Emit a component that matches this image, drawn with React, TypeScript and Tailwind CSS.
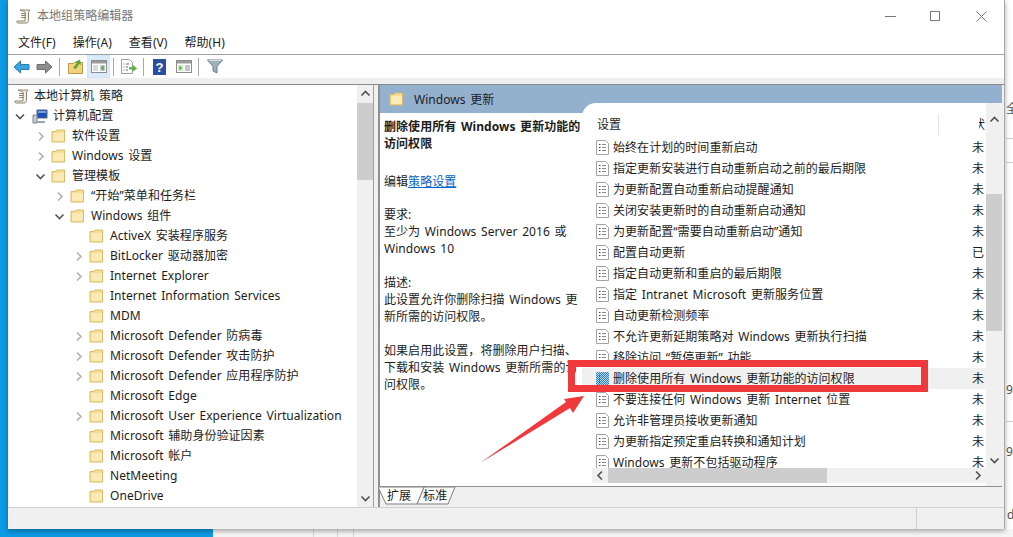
import { ReactNode } from "react";

type TreeRow = {
  label: string;
  depth: 1 | 2 | 3;
  chevron?: "right" | "down";
};

const TREE_ROWS: TreeRow[] = [
  { label: "软件设置", depth: 1, chevron: "right" },
  { label: "Windows 设置", depth: 1, chevron: "right" },
  { label: "管理模板", depth: 1, chevron: "down" },
  { label: "“开始”菜单和任务栏", depth: 2, chevron: "right" },
  { label: "Windows 组件", depth: 2, chevron: "down" },
  { label: "ActiveX 安装程序服务", depth: 3 },
  { label: "BitLocker 驱动器加密", depth: 3, chevron: "right" },
  { label: "Internet Explorer", depth: 3, chevron: "right" },
  { label: "Internet Information Services", depth: 3 },
  { label: "MDM", depth: 3 },
  { label: "Microsoft Defender 防病毒", depth: 3, chevron: "right" },
  { label: "Microsoft Defender 攻击防护", depth: 3, chevron: "right" },
  { label: "Microsoft Defender 应用程序防护", depth: 3, chevron: "right" },
  { label: "Microsoft Edge", depth: 3 },
  { label: "Microsoft User Experience Virtualization", depth: 3, chevron: "right" },
  { label: "Microsoft 辅助身份验证因素", depth: 3 },
  { label: "Microsoft 帐户", depth: 3 },
  { label: "NetMeeting", depth: 3 },
  { label: "OneDrive", depth: 3 },
];

const DEPTH_PADDING = { 1: "pl-[25px]", 2: "pl-[44px]", 3: "pl-[63px]" };

const SETTINGS = [
  { label: "始终在计划的时间重新启动", state: "未" },
  { label: "指定更新安装进行自动重新启动之前的最后期限", state: "未" },
  { label: "为更新配置自动重新启动提醒通知", state: "未" },
  { label: "关闭安装更新时的自动重新启动通知", state: "未" },
  { label: "为更新配置“需要自动重新启动”通知", state: "未" },
  { label: "配置自动更新", state: "已" },
  { label: "指定自动更新和重启的最后期限", state: "未" },
  { label: "指定 Intranet Microsoft 更新服务位置", state: "未" },
  { label: "自动更新检测频率", state: "未" },
  { label: "不允许更新延期策略对 Windows 更新执行扫描", state: "未" },
  { label: "移除访问 “暂停更新” 功能", state: "未" },
  { label: "删除使用所有 Windows 更新功能的访问权限", state: "未", selected: true },
  { label: "不要连接任何 Windows 更新 Internet 位置", state: "未" },
  { label: "允许非管理员接收更新通知", state: "未" },
  { label: "为更新指定预定重启转换和通知计划", state: "未" },
  { label: "Windows 更新不包括驱动程序", state: "未" },
];

function Folder() {
  return (
    <svg width="15" height="14" viewBox="0 0 15 14" className="shrink-0">
      <path d="M1 2.5h4l1-1.5h7.5v12H1z" fill="#f6dd90" stroke="#d9bb6a" strokeWidth="1" />
      <path d="M2 4h11v8H2z" fill="#fbeab5" />
    </svg>
  );
}

function PolicyIcon({ selected }: { selected?: boolean }) {
  if (selected) {
    return (
      <svg width="13" height="14" viewBox="0 0 13 14" className="shrink-0">
        <defs>
          <pattern id="dither" width="2" height="2" patternUnits="userSpaceOnUse">
            <rect width="2" height="2" fill="#2f7fc4" />
            <rect width="1" height="1" fill="#b9d8f0" />
            <rect x="1" y="1" width="1" height="1" fill="#b9d8f0" />
          </pattern>
        </defs>
        <rect width="13" height="14" fill="url(#dither)" />
        <path d="M3 4h1M3 7h1M3 10h1" stroke="#123" strokeWidth="1.2" />
      </svg>
    );
  }
  return (
    <svg width="13" height="15" viewBox="0 0 13 15" className="shrink-0">
      <path d="M.5.5h9l3 3v11H.5z" fill="#fff" stroke="#a3a3a3" />
      <path d="M3 4.5h1.5M3 7.5h1.5M3 10.5h1.5" stroke="#444" />
      <path d="M6 4.5h4M6 7.5h4M6 10.5h4" stroke="#8a8a8a" />
    </svg>
  );
}

function Chevron({ dir, className }: { dir: "up" | "down" | "left" | "right"; className?: string }) {
  const d = {
    up: "M1.5 6.5 5.5 2.5 9.5 6.5",
    down: "M1.5 3.5 5.5 7.5 9.5 3.5",
    left: "M7 1.5 3 5.5 7 9.5",
    right: "M4 1.5 8 5.5 4 9.5",
  }[dir];
  return (
    <svg width="11" height="11" viewBox="0 0 11 11" className={className}>
      <path d={d} fill="none" stroke="currentColor" strokeWidth="1.6" />
    </svg>
  );
}

function ScrollPaper({ size = 15 }: { size?: number }) {
  return (
    <svg width={size} height={size} viewBox="0 0 15 15" className="shrink-0">
      <path d="M4 1h10l-1.5 2v8.5c0 1.500-1 2.500-2.500 2.500H2c-1 0-1.500-1-1-2h8V3C9 2 5 2 4 1z" fill="#f4efdf" stroke="#8d8672" />
      <path d="M5 4.500h5M5 6.500h5M5 8.500h5" stroke="#8d8672" />
    </svg>
  );
}

function ToolButton({ children, active }: { children: ReactNode; active?: boolean }) {
  return (
    <div
      className={
        active
          ? "flex h-[23px] w-[23px] items-center justify-center border border-[#cce8ff] bg-[#d9ebf9]"
          : "flex h-[23px] w-[23px] items-center justify-center"
      }
    >
      {children}
    </div>
  );
}

function ToolSeparator() {
  return <div className="mx-[3px] h-[18px] w-px bg-[#a8a8a8]" />;
}

function PaneWindowIcon({ flip }: { flip?: boolean }) {
  return (
    <svg width="16" height="13" viewBox="0 0 16 13">
      <rect x=".5" y=".5" width="15" height="12" fill="#fff" stroke="#8c8c8c" />
      <rect x="1" y="1" width="14" height="2.500" fill="#9a9a9a" />
      <rect x="2" y="5" width="5" height="6" fill={flip ? "#cfe6c5" : "#d8d8d8"} />
      <path d="M9 6h5M9 8h5M9 10h5" stroke="#8a8a8a" />
      <path d={flip ? "M3.500 6l2.500 2-2.500 2z" : "M12.500 5.500l-2.500 2.500 2.500 2.500z"} fill="#3f9a46" />
    </svg>
  );
}

function Toolbar() {
  return (
    <div className="flex h-[23px] items-center bg-white pl-[2px]">
      <ToolButton>
        <svg width="17" height="14" viewBox="0 0 17 14">
          <path d="M1 7l6.500-6v3.500H16v5H7.500V13z" fill="#3aa4e0" stroke="#2a7db4" />
        </svg>
      </ToolButton>
      <ToolButton>
        <svg width="17" height="14" viewBox="0 0 17 14">
          <path d="M16 7L9.500 1v3.500H1v5h8.500V13z" fill="#8c8c8c" stroke="#6e6e6e" />
        </svg>
      </ToolButton>
      <ToolSeparator />
      <div className="ml-[1px]">
        <ToolButton>
          <svg width="15" height="15" viewBox="0 0 15 15">
            <path d="M.5 4.500h5l1-1h8v11H.5z" fill="#f4d27a" stroke="#b99b4b" />
            <path d="M5 9l4-5-2-1 5-2.500L13 6l-2-1-3 5z" fill="#5da53d" />
          </svg>
        </ToolButton>
      </div>
      <ToolButton active>
        <PaneWindowIcon />
      </ToolButton>
      <ToolSeparator />
      <ToolButton>
        <svg width="16" height="15" viewBox="0 0 16 15">
          <path d="M.5.500h8l3 3v11H.500z" fill="#fff" stroke="#a0a0a0" />
          <path d="M2.500 5h1M2.500 8h1M2.500 11h1M5 5h3M5 8h2M5 11h2" stroke="#666" />
          <path d="M8 8h3.500V5.500L16 9.500 11.500 13v-2.500H8z" fill="#62b545" />
        </svg>
      </ToolButton>
      <ToolSeparator />
      <div className="ml-[1px]">
        <ToolButton>
          <svg width="13" height="16" viewBox="0 0 13 16">
            <rect width="13" height="16" fill="#2b4f9e" />
            <text x="6.500" y="13" textAnchor="middle" fontSize="13" fontWeight="700" fill="#fff" fontFamily="Liberation Sans, sans-serif">
              ?
            </text>
          </svg>
        </ToolButton>
      </div>
      <div className="ml-[1px]">
        <ToolButton>
          <PaneWindowIcon flip />
        </ToolButton>
      </div>
      <ToolSeparator />
      <div className="ml-[1px]">
        <ToolButton>
          <svg width="16" height="15" viewBox="0 0 16 15">
            <path d="M.5 1h15L10 7.500V14l-4-2V7.500z" fill="#9fb0bd" stroke="#6f7d88" />
            <path d="M2 1.500h12" stroke="#d7dfe5" />
          </svg>
        </ToolButton>
      </div>
    </div>
  );
}

function TreePanel() {
  return (
    <div className="flex w-[365px] border-r border-[#9f9f9f] bg-white">
      <div className="min-w-0 flex-1 overflow-hidden pt-[1px]">
        <div className="flex h-5 items-center gap-[5px] pl-[5px]">
          <ScrollPaper />
          <span className="whitespace-nowrap">本地计算机 策略</span>
        </div>
        <div className="flex h-5 items-center pl-[5px]">
          <Chevron dir="down" className="w-3 shrink-0 text-[#555]" />
          <svg width="16" height="15" viewBox="0 0 16 15" className="ml-[6px] mr-[5px] shrink-0">
            <rect x="5" y="1" width="10" height="8" fill="#1c4fb4" stroke="#5c6f8c" />
            <path d="M6 2h8v2H6z" fill="#6ea4e6" />
            <path d="M1 6h4v8H1z" fill="#c7ccd4" stroke="#7a8494" />
            <path d="M5 12h8v2H5z" fill="#9aa3b0" />
          </svg>
          <span className="whitespace-nowrap">计算机配置</span>
        </div>
        {TREE_ROWS.map((row) => (
          <div key={row.label} className={`flex h-5 items-center ${DEPTH_PADDING[row.depth]}`}>
            <div className="flex w-3 shrink-0 justify-center">
              {row.chevron ? (
                <Chevron
                  dir={row.chevron}
                  className={row.chevron === "down" ? "text-[#555]" : "text-[#b0b0b0]"}
                />
              ) : null}
            </div>
            <div className="ml-[5px] mr-[6px]">
              <Folder />
            </div>
            <span className="whitespace-nowrap">{row.label}</span>
          </div>
        ))}
      </div>
      <div className="flex w-4 shrink-0 flex-col items-center justify-between bg-[#f0f0f0] text-[#505050]">
        <div className="flex w-full flex-col">
          <div className="flex h-[18px] items-center justify-center">
            <Chevron dir="up" />
          </div>
          <div className="h-[77px] w-full bg-[#cdcdcd]" />
        </div>
        <div className="flex h-[18px] items-center justify-center">
          <Chevron dir="down" />
        </div>
      </div>
    </div>
  );
}

function Description() {
  return (
    <div className="w-[202px] shrink-0 overflow-hidden pl-[4px] pt-[5px] leading-[17px]">
      <p className="w-[198px] font-bold">删除使用所有 Windows 更新功能的访问权限</p>
      <p className="mt-[21px]">
        编辑<span className="text-[#0066cc] underline">策略设置</span>
      </p>
      <p className="mt-[16px]">要求:</p>
      <p className="w-[190px]">至少为 Windows Server 2016 或 Windows 10</p>
      <p className="mt-[17px]">描述:</p>
      <p className="w-[196px]">此设置允许你删除扫描 Windows 更新所需的访问权限。</p>
      <p className="mt-[17px] w-[198px]">{"如果启用此设置\uFF0C将删除用户扫描、下载和安装 Windows 更新所需的访问权限。"}</p>
    </div>
  );
}

function SettingsList() {
  return (
    <div className="relative -mt-[10px] flex min-w-0 flex-1 flex-col overflow-hidden rounded-tl-[14px] bg-white">
      <div className="flex h-[32px] shrink-0 items-center">
        <span className="ml-[15px] mt-[11px] flex-1">设置</span>
        <div className="mt-[11px] flex self-stretch">
          <div className="w-px self-stretch bg-[#e5e5e5]" />
          <div className="flex w-[46px] items-center justify-end">
            <div className="flex w-[6px] justify-end overflow-hidden">
              <span className="shrink-0">状</span>
            </div>
          </div>
          <div className="w-[1px]" />
        </div>
        <div className="flex h-full w-4 shrink-0 justify-center bg-[#f0f0f0] pt-[12px] text-[#505050]">
          <Chevron dir="up" />
        </div>
      </div>
      <div className="flex min-h-0 flex-1">
        <div className="min-w-0 flex-1">
          <div className="h-[333px] overflow-hidden pt-[2px]">
            {SETTINGS.map((row) => (
              <div
                key={row.label}
                className={
                  row.selected
                    ? "flex h-[21px] items-center bg-[#f0f0f0] pl-[14px]"
                    : "flex h-[21px] items-center pl-[14px]"
                }
              >
                <PolicyIcon selected={row.selected} />
                <span className="ml-[4px] min-w-0 flex-1 overflow-hidden whitespace-nowrap">{row.label}</span>
                <span className="mr-[1px] w-[13px] shrink-0 overflow-hidden whitespace-nowrap">{row.state}</span>
              </div>
            ))}
          </div>
          <div className="ml-[10px] flex h-[15px] items-center bg-[#f0f0f0] text-[#505050]">
            <div className="flex w-4 justify-center">
              <Chevron dir="left" />
            </div>
            <div className="h-full w-[219px] bg-[#cdcdcd]" />
            <div className="flex-1" />
            <div className="mr-[1px] flex w-4 justify-center">
              <Chevron dir="right" />
            </div>
          </div>
        </div>
        <div className="flex w-4 shrink-0 flex-col bg-[#f0f0f0] text-[#505050]">
          <div className="h-[59px]" />
          <div className="h-[137px] bg-[#cdcdcd]" />
          <div className="flex-1" />
          <div className="flex h-[31px] items-start justify-center">
            <Chevron dir="down" />
          </div>
        </div>
      </div>
    </div>
  );
}

function Tabs() {
  return (
    <div className="relative flex h-[21px] shrink-0 items-start border-t border-[#8f8f8f] bg-[#f0f0f0] pl-[7px]">
      <svg width="80" height="21" viewBox="0 0 80 21" className="absolute -left-[2px] top-0">
        <path d="M39 17L46 0H77L70 17z" fill="#f8f8f8" stroke="#7f7f7f" />
        <path d="M0 0L8 17H39L46 0z" fill="#fff" stroke="#7f7f7f" />
      </svg>
      <span className="relative">扩展</span>
      <span className="relative ml-[12px]">标准</span>
    </div>
  );
}

export default function App() {
  return (
    <div className="relative h-[537px] w-[1013px] overflow-hidden bg-white font-['Noto_Sans','Noto_Sans_CJK_SC',sans-serif] text-[12px] tracking-[0.05px] text-[#1c1c1c] [word-spacing:1.5px]">
      {/* desktop behind the window */}
      <div className="absolute left-0 top-0 h-full w-[213px] bg-[#0d9ae4]" />
      <div className="absolute left-[213px] top-[529px] h-2 w-[800px] bg-[#f5f5f5]" />
      <div className="absolute left-[313px] top-[529px] h-2 w-px bg-[#d8d8d8]" />
      <div className="absolute left-[337px] top-[529px] h-2 w-px bg-[#d8d8d8]" />
      <div className="absolute left-[353px] top-[529px] h-2 w-px bg-[#d8d8d8]" />
      <div className="absolute left-[1006px] top-[138px] h-px w-2 bg-[#cfcfcf]" />
      <div className="absolute left-[1006px] top-[162px] h-px w-2 bg-[#cfcfcf]" />
      <div className="absolute left-[1006px] top-[421px] h-px w-2 bg-[#cfcfcf]" />
      <span className="absolute left-[1006px] top-[100px] text-[#555]">全</span>
      <span className="absolute left-[1006px] top-[381px] text-[#555]">9e</span>
      <span className="absolute left-[1006px] top-[443px] text-[#555]">9</span>
      <span className="absolute left-[1007px] top-[506px] text-[#555]">d</span>

      <div className="absolute left-[8px] top-0 flex h-[529px] w-[997px] flex-col border-r border-[#a8a8a8] bg-[#f0f0f0] shadow-[0_2px_5px_rgba(0,0,0,0.35)]">
        <div className="flex h-[32px] shrink-0 items-center bg-white pl-[8px] text-[#777]">
          <ScrollPaper />
          <span className="ml-[6px] flex-1">本地组策略编辑器</span>
          <div className="flex items-center pr-[17px]">
            <div className="h-px w-[11px] bg-[#777]" />
            <div className="ml-[34px] h-[10px] w-[10px] border border-[#777]" />
            <svg width="11" height="11" viewBox="0 0 11 11" className="ml-[36px]">
              <path d="M.5.5l10 10M10.500.5l-10 10" stroke="#777" />
            </svg>
          </div>
        </div>
        <div className="flex h-[23px] shrink-0 items-center gap-[17px] border-b border-[#a0a0a0] bg-white pl-[10px]">
          <span>文件(F)</span>
          <span>操作(A)</span>
          <span>查看(V)</span>
          <span>帮助(H)</span>
        </div>
        <Toolbar />
        <div className="h-[7px] shrink-0 border-b border-[#8a8a8a] bg-[#eeeeee]" />
        <div className="flex min-h-0 flex-1 pl-px">
          <TreePanel />
          <div className="w-[4px] shrink-0" />
          <div className="mr-[2px] flex min-w-0 flex-1 flex-col border-l-2 border-[#8f8f8f]">
            <div className="flex h-[28px] shrink-0 items-center bg-[#94b0cf] pl-[9px]">
              <Folder />
              <span className="ml-[10px] mt-[1px]">Windows 更新</span>
            </div>
            <div className="flex min-h-0 flex-1 bg-white">
              <Description />
              <SettingsList />
            </div>
            <Tabs />
          </div>
        </div>
        <div className="flex h-[22px] shrink-0 border-t border-[#d0d0d0]">
          <div className="w-[909px] border-r border-[#d0d0d0]" />
        </div>
      </div>

      {/* annotation added over the screenshot */}
      <div className="absolute left-[568px] top-[360px] h-[32px] w-[360px] border-[7px] border-[#f0393a]" />
      <svg width="1013" height="537" className="pointer-events-none absolute left-0 top-0">
        <polygon points="480,463 566,402 564,399 584,396 573,413 570,408" fill="#f0393a" />
      </svg>
    </div>
  );
}
